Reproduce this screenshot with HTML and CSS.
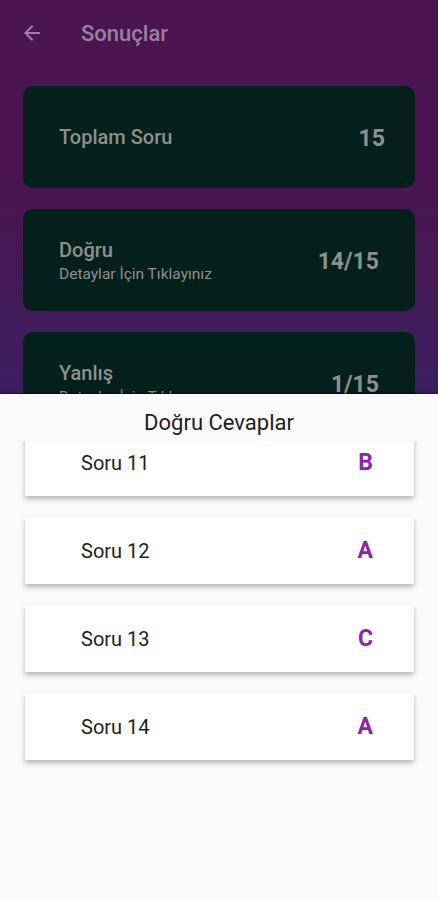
FILE: index.html
```html
<!DOCTYPE html>
<html lang="tr">
<head>
    <meta charset="UTF-8">
    <title>Sonuçlar</title>
    <link rel="stylesheet" href="styles.css">
</head>
<body>
    <div class="screen">
        <div class="appbar">
            <svg class="back" width="24" height="24" viewBox="0 0 24 24">
                <path d="M20 11H7.83l5.59-5.59L12 4l-8 8 8 8 1.41-1.41L7.83 13H20v-2z" fill="currentColor"/>
            </svg>
            <span class="title">Sonuçlar</span>
        </div>

        <div class="results">
            <div class="result-card total">
                <div class="result-text">
                    <div class="result-label">Toplam Soru</div>
                </div>
                <div class="result-value">15</div>
            </div>
            <div class="result-card">
                <div class="result-text">
                    <div class="result-label">Doğru</div>
                    <div class="result-hint">Detaylar İçin Tıklayınız</div>
                </div>
                <div class="result-value">14/15</div>
            </div>
            <div class="result-card">
                <div class="result-text">
                    <div class="result-label">Yanlış</div>
                    <div class="result-hint">Detaylar İçin Tıklayınız</div>
                </div>
                <div class="result-value">1/15</div>
            </div>
        </div>

        <!-- bottom sheet with correct answers -->
        <div class="sheet">
            <h3 class="sheet-title">Doğru Cevaplar</h3>
            <div class="answer-viewport">
                <div class="answer-list">
                    <div class="answer"><span>Soru 11</span><b>B</b></div>
                    <div class="answer"><span>Soru 12</span><b>A</b></div>
                    <div class="answer"><span>Soru 13</span><b>C</b></div>
                    <div class="answer"><span>Soru 14</span><b>A</b></div>
                </div>
            </div>
        </div>
    </div>
</body>
</html>
```
FILE: styles.css
```css
* {
    box-sizing: border-box;
}

body {
    margin: 0;
    font-family: Roboto, "Noto Sans", Arial, sans-serif;
    background: #fafafa;
}

.screen {
    position: relative;
    width: 438px;
    height: 900px;
    overflow: hidden;
    background-image: linear-gradient(#4a1550 0px, #4a1650 200px, #3b1f60 400px);
}

.appbar {
    display: flex;
    align-items: center;
    height: 66px;
    padding-left: 20px;
    color: #9c7fa3;
}

.back {
    display: block;
}

.title {
    margin-left: 37px;
    font-size: 22px;
    font-weight: 500;
}

.results {
    display: flex;
    flex-direction: column;
    gap: 21px;
    padding: 20px 23px 0;
}

.result-card {
    display: flex;
    align-items: center;
    justify-content: space-between;
    height: 102px;
    padding: 0 36px 0 36px;
    background: #03201a;
    border-radius: 10px;
    color: #8f8f8f;
}

.result-card.total {
    padding-right: 30px;
}

.result-label {
    font-size: 20px;
    font-weight: 500;
}

.result-hint {
    font-size: 15.5px;
    margin-top: 3px;
}

.result-value {
    font-size: 23px;
    font-weight: 700;
    margin-top: 2px;
}

.sheet {
    position: absolute;
    left: 0;
    right: 0;
    top: 394px;
    bottom: 0;
    background: #fafafa;
    box-shadow: 0 -1px 2px rgba(0, 0, 0, 0.5);
}

.sheet-title {
    margin: 0;
    padding-top: 16px;
    height: 47px;
    text-align: center;
    font-size: 22px;
    font-weight: 400;
    color: #1e1e1e;
}

.answer-viewport {
    overflow: hidden;
    height: 459px;
}

.answer-list {
    display: flex;
    flex-direction: column;
    gap: 21px;
    padding: 0 24px 10px 25px;
    margin-top: -12px;
}

.answer {
    display: flex;
    align-items: center;
    justify-content: space-between;
    height: 67px;
    padding: 0 41px 0 56px;
    background: #fff;
    box-shadow: 0 3px 5px rgba(0, 0, 0, 0.28);
    font-size: 20px;
    color: #1e1e1e;
}

.answer b {
    font-size: 23px;
    font-weight: 700;
    color: #8e24aa;
}
```
